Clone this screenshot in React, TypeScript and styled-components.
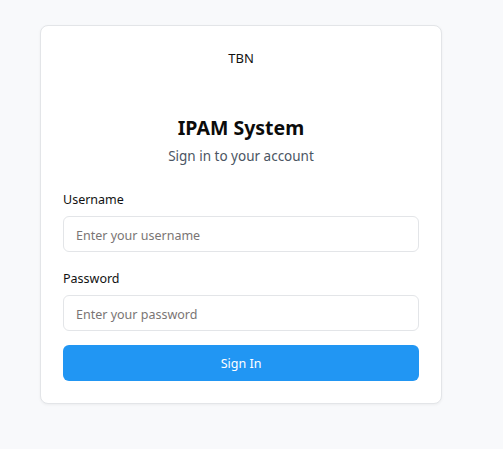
import React from "react"
import styled, { createGlobalStyle } from "styled-components"

const GlobalStyle = createGlobalStyle`
  html, body {
    margin: 0;
    padding: 0;
    background: #f8f9fb;
    font-family: "Noto Sans", "Open Sans", sans-serif;
  }
`

const Page = styled.div`
  min-height: 449px;
  padding: 25px 0 0 40px;
  box-sizing: border-box;
`

const Card = styled.div`
  width: 402px;
  box-sizing: border-box;
  background: #ffffff;
  border: 1px solid #e3e5e8;
  border-radius: 8px;
  box-shadow: 0 1px 3px rgba(0, 0, 0, 0.05);
  padding: 22px 22px 22px;
  display: flex;
  flex-direction: column;
`

const Brand = styled.div`
  text-align: center;
  font-size: 13px;
  color: #111111;
  line-height: 20px;
`

const Header = styled.div`
  margin-top: 46px;
  text-align: center;
`

const Title = styled.h1`
  margin: 0;
  font-size: 19.5px;
  font-weight: 700;
  color: #0b0b0b;
  line-height: 28px;
`

const Subtitle = styled.p`
  margin: 4px 0 0;
  font-size: 13.5px;
  color: #4b5563;
  line-height: 20px;
`

const Form = styled.form`
  margin-top: 25px;
  display: flex;
  flex-direction: column;
`

const Field = styled.div<{ $gap?: number }>`
  display: flex;
  flex-direction: column;
  margin-bottom: ${(p) => p.$gap ?? 0}px;
`

const Label = styled.label`
  font-size: 12.5px;
  color: #111111;
  line-height: 18px;
  margin-bottom: 7px;
`

const Input = styled.input`
  height: 36px;
  box-sizing: border-box;
  border: 1px solid #e3e5e8;
  border-radius: 6px;
  padding: 2px 12px 0;
  font-family: inherit;
  font-size: 12.5px;
  color: #111111;
  background: #ffffff;
  outline: none;

  &::placeholder {
    color: #7a7574;
  }
`

const Button = styled.button`
  margin-top: 14px;
  height: 36px;
  border: none;
  border-radius: 6px;
  padding-top: 1px;
  background: #2196f3;
  color: #ffffff;
  font-family: inherit;
  font-size: 12.5px;
  cursor: pointer;
`

export default function App() {
  return (
    <Page>
      <GlobalStyle />
      <Card>
        <Brand>TBN</Brand>
        <Header>
          <Title>IPAM System</Title>
          <Subtitle>Sign in to your account</Subtitle>
        </Header>
        <Form onSubmit={(e) => e.preventDefault()}>
          <Field $gap={18}>
            <Label>Username</Label>
            <Input placeholder="Enter your username" />
          </Field>
          <Field>
            <Label>Password</Label>
            <Input type="password" placeholder="Enter your password" />
          </Field>
          <Button type="submit">Sign In</Button>
        </Form>
      </Card>
    </Page>
  )
}
